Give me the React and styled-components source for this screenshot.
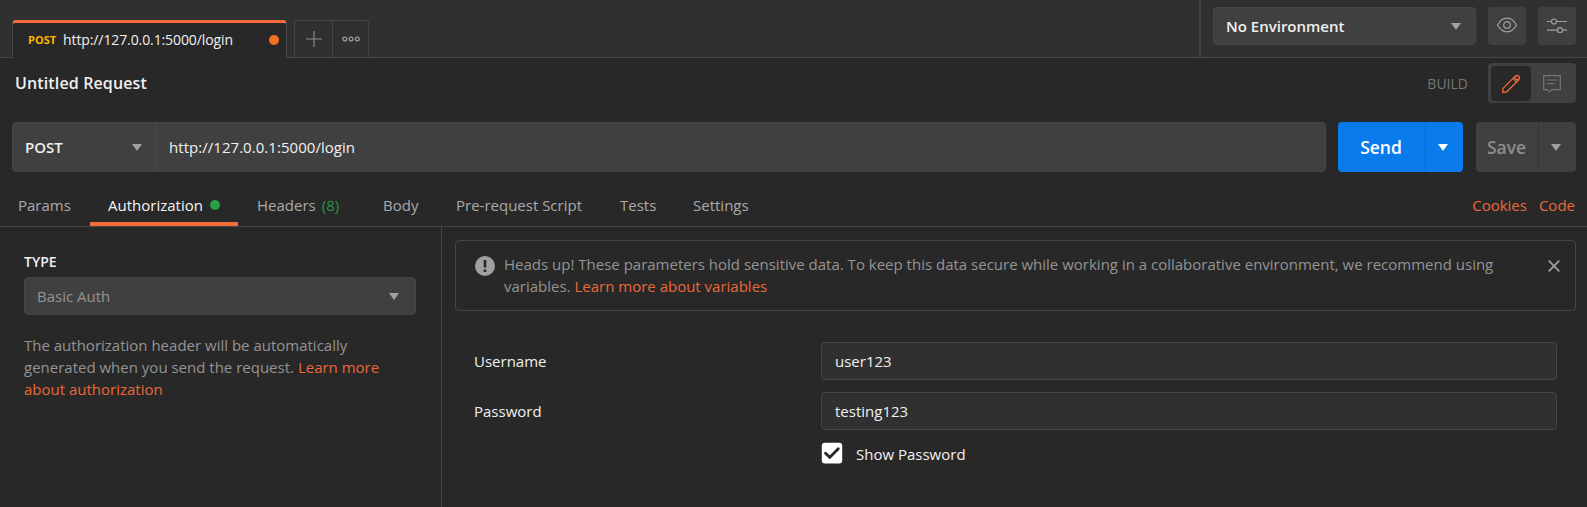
import React from "react";
import styled, { createGlobalStyle } from "styled-components";

const Global = createGlobalStyle`
  * { box-sizing: border-box; }
  body {
    margin: 0;
    background: #282828;
    color: #f0f0f0;
    font: 400 15px/22px "Open Sans", "Noto Sans", sans-serif;
    overflow: hidden;
  }
  button, input { font: inherit; color: inherit; }
`;

const Page = styled.div`
  display: flex;
  flex-direction: column;
  width: 100%;
  height: 100vh;
`;

/* ---------- header ---------- */
const Header = styled.header`
  display: flex;
  height: 58px;
  background: #303030;
  box-shadow: inset 0 -1px #464646;
`;
const TabStrip = styled.div`
  flex: 1;
  display: flex;
  gap: 7px;
  padding: 20px 0 0 12px;
`;
const RequestTab = styled.div`
  width: 275px;
  display: flex;
  align-items: center;
  padding: 0 7px 1px 15px;
  background: #282828;
  border: 1px solid #464646;
  border-top: 3px solid #f26b3a;
  border-bottom: 0;
  border-radius: 4px 4px 0 0;
  font-size: 14px;
`;
const Method = styled.span`
  width: 35px;
  padding-bottom: 1px;
  color: #ffb400;
  font-size: 11px;
  font-weight: 700;
`;
const TabName = styled.span`
  flex: 1;
  padding-bottom: 1px;
  letter-spacing: -0.1px;
`;
const Dot = styled.i`
  width: 10px;
  height: 10px;
  border-radius: 50%;
  background: ${(p) => p.$color};
`;
const TabActions = styled.div`
  display: flex;
  width: 75px;
  border: 1px solid #464646;
  border-bottom: 0;
  border-radius: 4px 4px 0 0;
  margin-bottom: 1px;
`;
const TabAction = styled.button`
  width: ${(p) => p.$w}px;
  padding: 0;
  border: 0;
  background: none;
  display: flex;
  align-items: center;
  justify-content: center;
  & + & { border-left: 1px solid #464646; }
`;
const Environment = styled.div`
  display: flex;
  align-items: flex-start;
  gap: 12px;
  width: 388px;
  padding: 7px 11px 0 12px;
  border-left: 2px solid #464646;
  height: 57px;
`;
const Select = styled.div`
  flex: ${(p) => (p.$w ? "none" : 1)};
  width: ${(p) => (p.$w ? p.$w + "px" : "auto")};
  height: 38px;
  display: flex;
  align-items: center;
  justify-content: space-between;
  padding: 0 ${(p) => p.$right || 14}px 0 12px;
  background: #404040;
  border: 1px solid #464646;
  border-radius: 4px;
  color: ${(p) => p.$color || "#f0f0f0"};
  font-weight: ${(p) => p.$weight || 400};
`;
const Caret = styled.i`
  border: 5px solid transparent;
  border-top: 7px solid ${(p) => p.$color || "#a0a0a0"};
  border-bottom: 0;
`;
const IconButton = styled.button`
  width: 38px;
  height: 38px;
  padding: 0 0 2px;
  display: flex;
  align-items: center;
  justify-content: center;
  background: #404040;
  border: 0;
  border-radius: 4px;
`;

/* ---------- title ---------- */
const TitleRow = styled.div`
  display: flex;
  align-items: center;
  height: 50px;
  padding: 0 11px 0 15px;
`;
const Title = styled.h1`
  flex: 1;
  margin: 0;
  font-size: 16px;
  font-weight: 600;
  letter-spacing: 0.13px;
`;
const Build = styled.span`
  margin: 2px 20px 0 0;
  font-size: 14px;
  color: #787878;
`;
const Toggle = styled.div`
  display: flex;
  width: 88px;
  height: 40px;
  padding: 3px;
  border-radius: 4px;
  background: #404040;
`;
const ToggleItem = styled.button`
  width: 40px;
  height: 35px;
  padding: 0 0 0 ${(p) => (p.$active ? 0 : 2)}px;
  display: flex;
  align-items: center;
  justify-content: center;
  border: 0;
  border-radius: 4px;
  background: ${(p) => (p.$active ? "#282828" : "transparent")};
`;

/* ---------- url bar ---------- */
const UrlRow = styled.div`
  display: flex;
  height: 50px;
  margin: 14px 11px 0 12px;
`;
const UrlBox = styled.div`
  flex: 1;
  display: flex;
  background: #404040;
  border: 1px solid #464646;
  border-radius: 4px;
`;
const MethodSelect = styled.div`
  width: 144px;
  display: flex;
  align-items: center;
  justify-content: space-between;
  padding: 0 14px 0 12px;
  border-right: 1px solid #4a4a4a;
  font-weight: 600;
`;
const Url = styled.div`
  display: flex;
  align-items: center;
  padding-left: 12px;
  letter-spacing: 0.04px;
`;
const SplitButton = styled.div`
  display: flex;
  width: ${(p) => p.$w}px;
  margin-left: ${(p) => p.$gap}px;
  border-radius: 4px;
  background: ${(p) => p.$bg};
  color: ${(p) => p.$color};
  font-size: 17.5px;
  font-weight: 600;
`;
const SplitMain = styled.div`
  flex: 1;
  display: flex;
  align-items: center;
  justify-content: center;
  padding-right: 1px;
`;
const SplitArrow = styled.div`
  width: 38px;
  display: flex;
  align-items: center;
  justify-content: center;
  padding-right: 4px;
  border-left: 1px solid ${(p) => p.$line};
`;

/* ---------- section tabs ---------- */
const Sections = styled.nav`
  display: flex;
  height: 55px;
  padding: 13px 12px 0 0;
  border-bottom: 1px solid #464646;
`;
const Section = styled.div`
  display: flex;
  align-items: center;
  gap: ${(p) => (p.$active ? 7 : 6)}px;
  width: ${(p) => p.$w}px;
  padding: 0 0 2px ${(p) => p.$left || 18}px;
  color: ${(p) => (p.$active ? "#f5f5f5" : "#aaaaaa")};
  box-shadow: ${(p) => (p.$active ? "inset 0 -4px #f26b3a" : "none")};
`;
const Count = styled.span`
  color: #26964a;
`;
const SectionLinks = styled.div`
  display: flex;
  align-items: center;
  gap: 12px;
  margin-left: auto;
  padding-bottom: 2px;
`;
const Link = styled.a`
  color: #e8683a;
`;

/* ---------- body ---------- */
const Body = styled.main`
  flex: 1;
  display: flex;
`;
const Side = styled.aside`
  width: 442px;
  padding: 24px 25px 0 24px;
  border-right: 1px solid #464646;
`;
const TypeLabel = styled.div`
  margin-bottom: 4px;
  font-size: 14px;
  font-weight: 600;
`;
const Help = styled.p`
  width: 380px;
  margin: 19px 0 0;
  color: #949494;
`;
const Content = styled.section`
  flex: 1;
  padding: 13px 11px 0 13px;
`;
const Alert = styled.div`
  display: flex;
  align-items: flex-start;
  height: 71px;
  padding: 12px 15px 0 19px;
  border: 1px solid #464646;
  border-radius: 4px;
  color: #949494;
`;
const AlertIcon = styled.svg`
  flex: none;
  margin-top: 3px;
`;
const CloseIcon = styled.svg`
  flex: none;
  margin-top: 7px;
`;
const AlertText = styled.p`
  width: 1010px;
  margin: 0 auto 0 9px;
`;
const Form = styled.div`
  display: grid;
  grid-template-columns: 347px 1fr;
  row-gap: 12px;
  padding: 31px 19px 0;
  align-items: center;
`;
const Input = styled.input`
  width: 100%;
  height: 38px;
  padding: 0 0 0 13px;
  background: #303030;
  border: 1px solid #464646;
  border-radius: 4px;
  outline: 0;
`;
const CheckRow = styled.label`
  grid-column: 2;
  display: flex;
  align-items: flex-start;
  gap: 13px;
`;
const CheckText = styled.span`
  margin-top: 1px;
`;

const EyeIcon = () => (
  <svg width="22" height="16" viewBox="0 0 22 16" fill="none" stroke="#a0a0a0" strokeWidth="1.2">
    <path d="M1.5 8C4 3.5 7 1.2 11 1.2S18 3.5 20.5 8C18 12.5 15 14.8 11 14.8S4 12.5 1.5 8Z" />
    <circle cx="11" cy="8" r="3.3" />
  </svg>
);
const SlidersIcon = () => (
  <svg width="20" height="16" viewBox="0 0 20 16" fill="none" stroke="#a0a0a0" strokeWidth="1.2">
    <path d="M0 4.5H4.4M9.6 4.5H20M0 13.2H10.4M15.6 13.2H20" />
    <circle cx="7" cy="4.5" r="2.5" />
    <circle cx="13" cy="13.2" r="2.5" />
  </svg>
);
const PencilIcon = () => (
  <svg width="20" height="20" viewBox="0 0 20 20" fill="none" stroke="#f26b3a" strokeWidth="1.3" strokeLinejoin="round">
    <path d="M1.6 18.4L2 14.4L14 2.4Q16 .7 17.7 2.3Q19.3 4 17.6 6L5.6 18Z" />
    <path d="M12 4.4L15.6 8M14 2.4Q13.8 5.8 17.6 6" />
  </svg>
);
const CommentIcon = () => (
  <svg width="18" height="18" viewBox="0 0 18 18" fill="none" stroke="#757575" strokeWidth="1.2">
    <path d="M.7 .7H17.3V14.7H8.8L6.6 17L4.4 14.7H.7ZM4 5H14M4 8.6H11.5" />
  </svg>
);

export default function App() {
  return (
    <Page>
      <Global />
      <Header>
        <TabStrip>
          <RequestTab>
            <Method>POST</Method>
            <TabName>http://127.0.0.1:5000/login</TabName>
            <Dot $color="#f47023" />
          </RequestTab>
          <TabActions>
            <TabAction $w={37}>
              <svg width="16" height="16" stroke="#8c8c8c" strokeWidth="1.2">
                <path d="M0 8H16M8 0V16" />
              </svg>
            </TabAction>
            <TabAction $w={36}>
              <svg width="18" height="6" fill="none" stroke="#a0a0a0" strokeWidth="1.2">
                <circle cx="2.7" cy="3" r="1.9" />
                <circle cx="9" cy="3" r="1.9" />
                <circle cx="15.3" cy="3" r="1.9" />
              </svg>
            </TabAction>
          </TabActions>
        </TabStrip>
        <Environment>
          <Select $w={263} $weight={600}>
            No Environment
            <Caret />
          </Select>
          <IconButton><EyeIcon /></IconButton>
          <IconButton><SlidersIcon /></IconButton>
        </Environment>
      </Header>

      <TitleRow>
        <Title>Untitled Request</Title>
        <Build>BUILD</Build>
        <Toggle>
          <ToggleItem $active><PencilIcon /></ToggleItem>
          <ToggleItem><CommentIcon /></ToggleItem>
        </Toggle>
      </TitleRow>

      <UrlRow>
        <UrlBox>
          <MethodSelect>POST<Caret /></MethodSelect>
          <Url>http://127.0.0.1:5000/login</Url>
        </UrlBox>
        <SplitButton $w={125} $gap={12} $bg="#097bed" $color="#fff">
          <SplitMain>Send</SplitMain>
          <SplitArrow $line="#0a6dd0"><Caret $color="#fff" /></SplitArrow>
        </SplitButton>
        <SplitButton $w={100} $gap={13} $bg="#404040" $color="#8c8c8c">
          <SplitMain>Save</SplitMain>
          <SplitArrow $line="#363636"><Caret /></SplitArrow>
        </SplitButton>
      </UrlRow>

      <Sections>
        <Section $w={90}>Params</Section>
        <Section $w={148} $active>Authorization<Dot $color="#26a148" /></Section>
        <Section $w={127} $left={19}>Headers<Count>(8)</Count></Section>
        <Section $w={73}>Body</Section>
        <Section $w={164}>Pre-request Script</Section>
        <Section $w={73}>Tests</Section>
        <Section $w={93}>Settings</Section>
        <SectionLinks>
          <Link>Cookies</Link>
          <Link>Code</Link>
        </SectionLinks>
      </Sections>

      <Body>
        <Side>
          <TypeLabel>TYPE</TypeLabel>
          <Select $color="#949494" $right={16}>Basic Auth<Caret /></Select>
          <Help>
            The authorization header will be automatically generated when you send the request.{" "}
            <Link>Learn more about authorization</Link>
          </Help>
        </Side>
        <Content>
          <Alert>
            <AlertIcon width="20" height="20" viewBox="0 0 20 20">
              <circle cx="10" cy="10" r="10" fill="#a0a0a0" />
              <path d="M10 4V11.6M10 13.6V16" stroke="#282828" strokeWidth="2.6" />
            </AlertIcon>
            <AlertText>
              Heads up! These parameters hold sensitive data. To keep this data secure while working in a
              collaborative environment, we recommend using variables. <Link>Learn more about variables</Link>
            </AlertText>
            <CloseIcon width="12" height="12" viewBox="0 0 12 12" stroke="#a0a0a0" strokeWidth="1.7">
              <path d="M.7 .7L11.3 11.3M11.3 .7L.7 11.3" />
            </CloseIcon>
          </Alert>
          <Form>
            <span>Username</span>
            <Input defaultValue="user123" />
            <span>Password</span>
            <Input defaultValue="testing123" />
            <CheckRow>
              <svg width="22" height="22" viewBox="0 0 22 22" fill="none">
                <rect x=".8" y=".8" width="20.4" height="20.8" rx="3" fill="#fff" />
                <path d="M4.5 11.2L8.8 15.2L17.3 6.8" stroke="#282828" strokeWidth="2.8" strokeLinecap="round" />
              </svg>
              <CheckText>Show Password</CheckText>
            </CheckRow>
          </Form>
        </Content>
      </Body>
    </Page>
  );
}
